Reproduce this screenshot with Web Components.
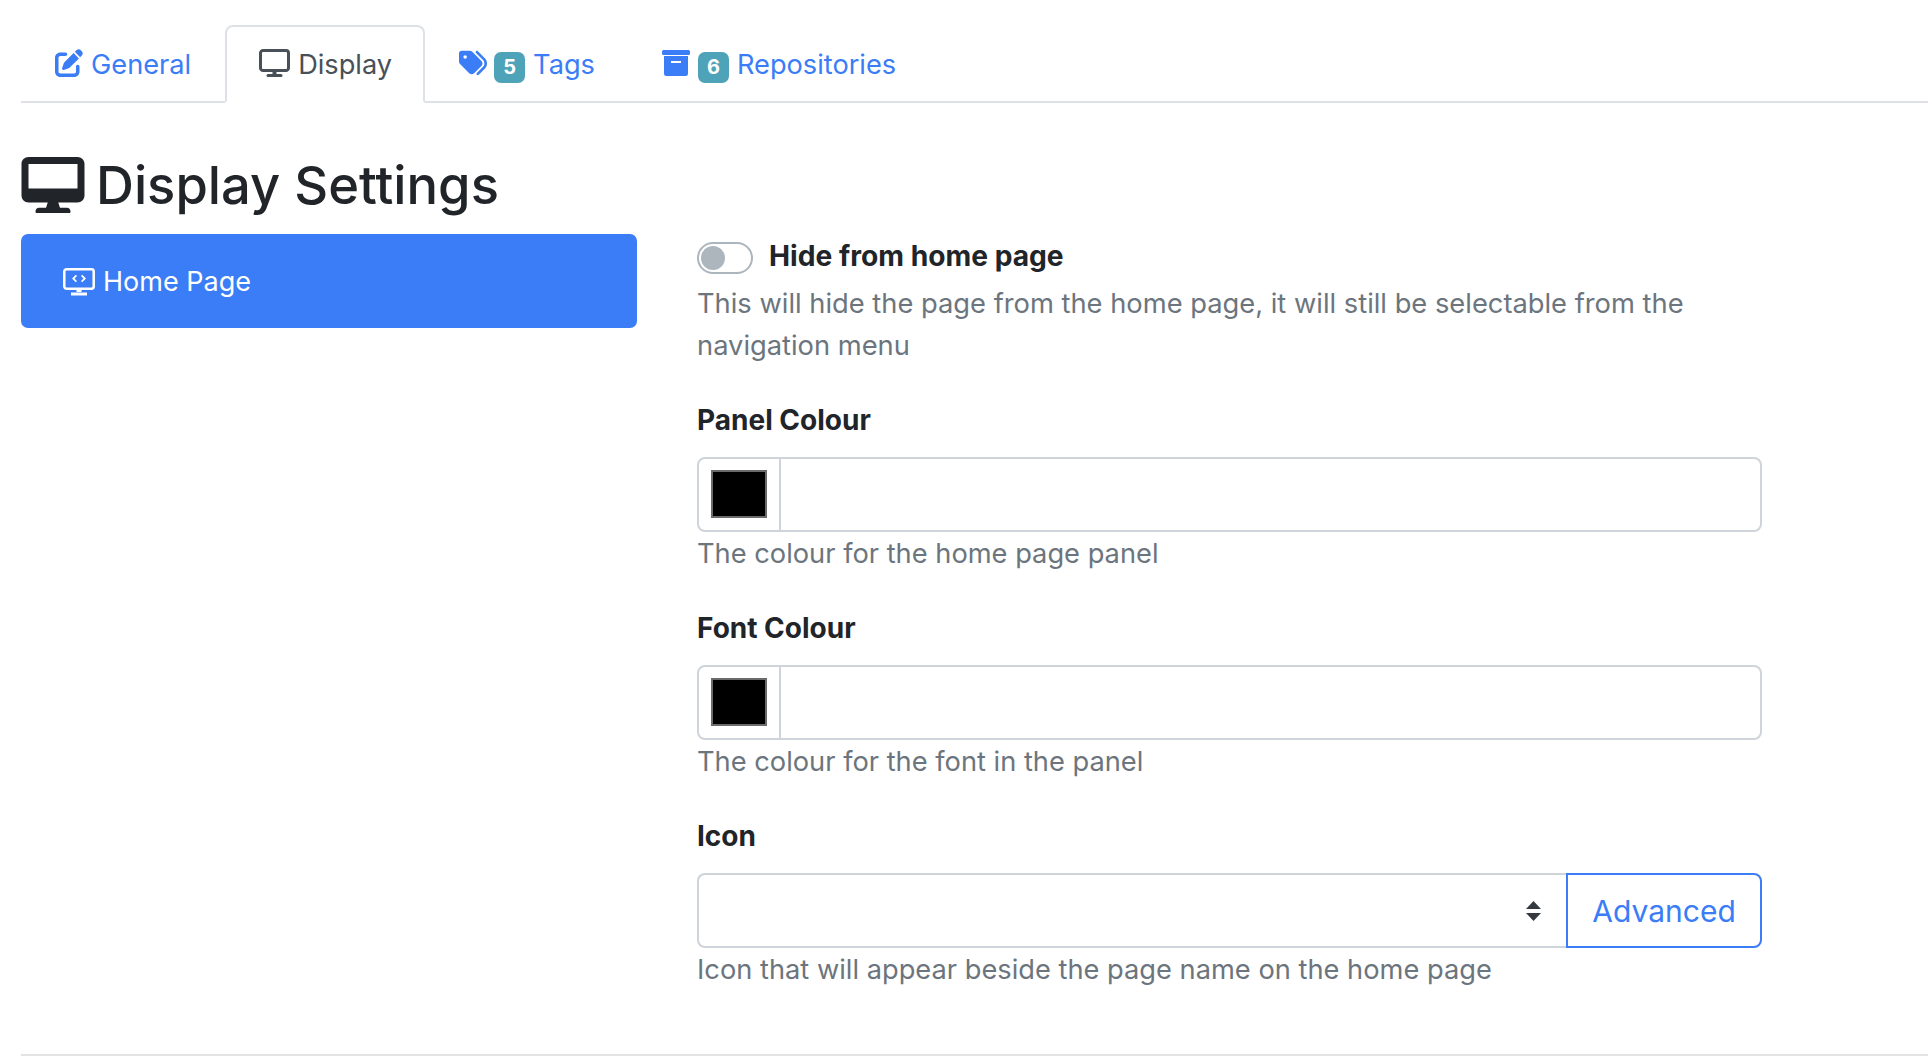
<!DOCTYPE html>
<html lang="en"><head><meta charset="utf-8"><title>Display Settings</title>
<style>
html,body{margin:0;padding:0;background:#fff}
body{font-family:Inter,"Liberation Sans",sans-serif;font-size:27.25px;line-height:42px;color:#212529;height:1056px;overflow:hidden}
</style></head><body>
<settings-page></settings-page>
<template id="t-tabs">
<style>
:host{display:flex;align-items:flex-end;margin:25px 0 0 21px;border-bottom:2px solid #dee2e6;height:78px;box-sizing:border-box}
</style><slot></slot>
</template>
<template id="t-tab">
<style>
:host{display:flex;align-items:center;box-sizing:border-box;height:78px;margin-bottom:-2px;padding:1px 32px 0;color:#3a7df6;gap:8px;border:2px solid transparent;border-radius:8px 8px 0 0;white-space:nowrap;font-size:27.2px}
:host([active]){color:#495057;border-color:#dee2e6 #dee2e6 #fff;background:#fff;padding-right:31px}
</style><slot></slot>
</template>
<template id="t-badge">
<style>
:host{display:inline-flex;align-items:center;justify-content:center;width:31px;height:31px;border-radius:7px;background:#4fa3b8;color:#fff;font-size:20px;font-weight:700;line-height:1;margin-top:5px}
</style><slot></slot>
</template>
<template id="t-side">
<style>
:host{display:flex;align-items:center;gap:8px;box-sizing:border-box;height:94px;padding:1px 42px 0;background:#3a7df6;color:#fff;border-radius:7px;font-size:27px}
</style><slot></slot>
</template>
<template id="t-field">
<style>
:host{display:block;margin-bottom:30px}
.l{display:block;font-weight:700;font-size:28px;padding-top:2px;margin-bottom:16px}
.h{display:block;color:#6c757d;margin-top:1px}
</style>
<span class="l"><slot name="label"></slot></span>
<slot></slot>
<span class="h"><slot name="help"></slot></span>
</template>
<template id="t-color">
<style>
:host{display:flex;box-sizing:border-box;height:75px;border:2px solid #ced4da;border-radius:8px;background:#fff}
.sw{box-sizing:border-box;width:82px;border-right:2px solid #ced4da;padding:11px 12px 12px 12px;display:flex}
.sw i{display:block;flex:1;background:#000;border:2px solid #6b6b6b}
</style>
<div class="sw"><i></i></div>
</template>
<template id="t-select">
<style>
:host{display:flex;height:75px}
.s{flex:1;box-sizing:border-box;border:2px solid #ced4da;border-right:0;border-radius:8px 0 0 8px;display:flex;align-items:center;justify-content:flex-end;padding-right:24px}
.b{box-sizing:border-box;width:196px;border:2px solid #3a7df6;border-radius:0 8px 8px 0;color:#3a7df6;display:flex;align-items:center;justify-content:center;padding-top:1px;font-size:30px}
svg{display:block}
</style>
<div class="s"><svg width="17" height="20" viewBox="0 0 17 20"><path fill="#343a40" d="M8.500 0l7.500 8H1zM8.500 20L1 12h15z"/></svg></div>
<div class="b"><slot></slot></div>
</template>
<template id="t-switch">
<style>
:host{display:block;width:56px;height:32px;box-sizing:border-box;border:2px solid #adb5bd;border-radius:16px;flex:none;margin-top:4px}
i{display:block;width:24px;height:24px;margin:2px 0 0 2px;border-radius:50%;background:#adb5bd}
</style><i></i>
</template>
<template id="t-page">
<style>
:host{display:block}
h1{font-size:52.5px;line-height:60px;font-weight:500;margin:0;display:flex;align-items:center;gap:11px;color:#212529}
h1 svg{fill:#212529;display:block}
settings-tab svg{fill:currentColor;display:block;margin-top:-3px}
.tag-badge{margin-left:-1px}
.tag-text{margin-right:-1px}
.head{margin:52px 0 0 21px;height:79px}
.main{display:grid;grid-template-columns:616px 1065px;column-gap:60px;margin-left:21px}
.right{padding-top:1px}
.top{display:flex;align-items:center;gap:16px;font-weight:700;font-size:28.2px;height:42px}
.desc{color:#6c757d;margin:6px 0 30px;font-size:27.3px}
settings-side svg{display:block}
hr{position:absolute;left:21px;right:0;top:1054px;margin:0;border:0;height:2px;background:#e3e3e3}
</style>
<settings-tabs>
  <settings-tab><svg width="28" height="28" viewBox="0 0 512 512"><path d="M471.6 21.7c-21.9-21.9-57.3-21.9-79.2 0L362.3 51.7l97.9 97.9 30.1-30.1c21.9-21.9 21.9-57.3 0-79.2L471.6 21.7zm-299.2 220c-6.1 6.1-10.8 13.6-13.5 21.9l-29.6 88.8c-2.9 8.6-.6 18.1 5.8 24.6s15.9 8.7 24.6 5.8l88.8-29.6c8.2-2.7 15.7-7.4 21.9-13.5L437.7 172.3 339.7 74.3 172.4 241.7zM96 64C43 64 0 107 0 160V416c0 53 43 96 96 96H352c53 0 96-43 96-96V320c0-17.7-14.3-32-32-32s-32 14.3-32 32v96c0 17.7-14.3 32-32 32H96c-17.7 0-32-14.3-32-32V160c0-17.7 14.3-32 32-32h96c17.7 0 32-14.3 32-32s-14.3-32-32-32H96z"/></svg><span>General</span></settings-tab>
  <settings-tab active><svg width="31" height="28" viewBox="0 0 31 28"><path fill="none" stroke="currentColor" stroke-width="3" d="M4 1.500h23a2.500 2.500 0 0 1 2.500 2.500v15a2.500 2.500 0 0 1-2.500 2.500H4A2.500 2.500 0 0 1 1.500 19V4A2.500 2.500 0 0 1 4 1.500z"/><path d="M13.500 22h4v3h-4z"/><rect x="7.500" y="25" width="16" height="3" rx="1.500"/></svg><span>Display</span></settings-tab>
  <settings-tab><svg width="28" height="28" viewBox="0 0 512 512"><path d="M345 39.1L472.8 168.4c52.4 53 52.4 138.2 0 191.2L360.8 472.9c-9.3 9.4-24.5 9.5-33.9 .2s-9.5-24.5-.2-33.9L438.6 325.9c33.9-34.3 33.9-89.4 0-123.7L310.9 72.9c-9.3-9.4-9.2-24.6 .2-33.9s24.6-9.2 33.9 .2zM0 229.5V80C0 53.5 21.5 32 48 32H197.5c17 0 33.3 6.7 45.3 18.7l168 168c25 25 25 65.5 0 90.5L277.3 442.7c-25 25-65.5 25-90.5 0l-168-168C6.7 262.700 0 246.500 0 229.500zM144 144a32 32 0 1 0 -64 0 32 32 0 1 0 64 0z"/></svg><settings-badge class="tag-badge">5</settings-badge><span class="tag-text">Tags</span></settings-tab>
  <settings-tab><svg width="28" height="26" viewBox="0 0 28 26"><path fill-rule="evenodd" d="M1.500 0h25A1.500 1.500 0 0 1 28 1.500v2A1.500 1.500 0 0 1 26.500 5h-25A1.500 1.500 0 0 1 0 3.500v-2A1.500 1.500 0 0 1 1.500 0zM2 6h24v17.500a2.500 2.500 0 0 1-2.500 2.500h-19A2.500 2.500 0 0 1 2 23.500zM9 11v2h10v-2z"/></svg><settings-badge>6</settings-badge><span>Repositories</span></settings-tab>
</settings-tabs>
<div class="head"><h1><svg width="64" height="56" viewBox="0 0 576 512"><path d="M64 0C28.700 0 0 28.700 0 64V352c0 35.300 28.700 64 64 64H240l-16 48H160c-17.700 0-32 14.300-32 32s14.300 32 32 32H416c17.700 0 32-14.300 32-32s-14.300-32-32-32H352l-16-48H512c35.300 0 64-28.700 64-64V64c0-35.300-28.700-64-64-64H64zM512 64V288H64V64H512z"/></svg><span>Display Settings</span></h1></div>
<div class="main">
  <div><settings-side><svg width="32" height="28" viewBox="0 0 32 28"><path fill="none" stroke="#fff" stroke-width="2.500" d="M3.500 1.300h25a2.200 2.200 0 0 1 2.200 2.200v15a2.200 2.200 0 0 1-2.200 2.200h-25a2.200 2.200 0 0 1-2.200-2.200v-15a2.200 2.200 0 0 1 2.200-2.200z"/><path fill="#fff" d="M13.500 21h5v3h-5zM8 24.500h16v3H8zM12.800 6.800l-3.800 3.700 3.800 3.700 1.200-1.200-2.500-2.500 2.500-2.500zM19.200 6.800l3.800 3.700-3.800 3.700-1.200-1.200 2.500-2.500-2.500-2.500z"/></svg><span>Home Page</span></settings-side></div>
  <div class="right">
    <div class="top"><settings-switch></settings-switch><span>Hide from home page</span></div>
    <div class="desc">This will hide the page from the home page, it will still be selectable from the navigation menu</div>
    <settings-field><span slot="label">Panel Colour</span><settings-color></settings-color><span slot="help">The colour for the home page panel</span></settings-field>
    <settings-field><span slot="label">Font Colour</span><settings-color></settings-color><span slot="help">The colour for the font in the panel</span></settings-field>
    <settings-field><span slot="label">Icon</span><settings-select>Advanced</settings-select><span slot="help">Icon that will appear beside the page name on the home page</span></settings-field>
  </div>
</div>
<hr>
</template>
<script>
const def=(name,id)=>customElements.define(name,class extends HTMLElement{constructor(){super();this.attachShadow({mode:'open'}).appendChild(document.getElementById(id).content.cloneNode(true));}});
def('settings-tabs','t-tabs');def('settings-tab','t-tab');def('settings-badge','t-badge');def('settings-side','t-side');def('settings-field','t-field');def('settings-color','t-color');def('settings-select','t-select');def('settings-switch','t-switch');def('settings-page','t-page');
</script>
</body></html>
